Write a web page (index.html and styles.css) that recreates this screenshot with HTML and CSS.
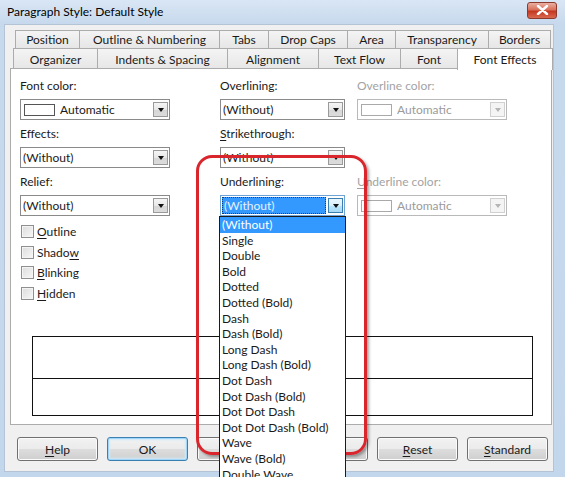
FILE: index.html
```html
<!DOCTYPE html>
<html>
<head>
<meta charset="utf-8">
<link rel="stylesheet" href="styles.css">
</head>
<body>
<div class="window">
  <div class="titlebar">
    <span class="title">Paragraph Style: Default Style</span>
    <span class="close"><svg width="13" height="10" viewBox="0 0 13 10"><path d="M2 1 L11 9 M11 1 L2 9" stroke="#fff" stroke-width="2.4" stroke-linecap="round"/></svg></span>
  </div>
  <div class="client">
    <div class="tabrow row1">
      <div class="tab">Position</div>
      <div class="tab">Outline &amp; Numbering</div>
      <div class="tab">Tabs</div>
      <div class="tab">Drop Caps</div>
      <div class="tab">Area</div>
      <div class="tab">Transparency</div>
      <div class="tab">Borders</div>
    </div>
    <div class="tabrow row2">
      <div class="tab">Organizer</div>
      <div class="tab">Indents &amp; Spacing</div>
      <div class="tab">Alignment</div>
      <div class="tab">Text Flow</div>
      <div class="tab">Font</div>
      <div class="tab selected">Font Effects</div>
    </div>
    <div class="panel">
      <div class="form">
        <div class="group">
          <div class="label">Font color:</div>
          <div class="combo wide"><span class="swatch"></span><span class="ctext">Automatic</span><span class="cbtn"><i class="arrow"></i></span></div>
        </div>
        <div class="group">
          <div class="label">Overlining:</div>
          <div class="combo narrow"><span class="ctext">(Without)</span><span class="cbtn"><i class="arrow"></i></span></div>
        </div>
        <div class="group">
          <div class="label disabled">Overline color:</div>
          <div class="combo wide off"><span class="swatch"></span><span class="ctext">Automatic</span><span class="cbtn"><i class="arrow"></i></span></div>
        </div>

        <div class="group">
          <div class="label">Effects:</div>
          <div class="combo wide"><span class="ctext">(Without)</span><span class="cbtn"><i class="arrow"></i></span></div>
        </div>
        <div class="group">
          <div class="label"><u>S</u>trikethrough:</div>
          <div class="combo narrow"><span class="ctext">(Without)</span><span class="cbtn"><i class="arrow"></i></span></div>
        </div>
        <div class="group"></div>

        <div class="group">
          <div class="label">Relief:</div>
          <div class="combo wide"><span class="ctext">(Without)</span><span class="cbtn"><i class="arrow"></i></span></div>
        </div>
        <div class="group">
          <div class="label">Underlining:</div>
          <div class="combo narrow focus"><span class="ctext">(Without)</span><span class="cbtn"><i class="arrow"></i></span></div>
        </div>
        <div class="group">
          <div class="label disabled"><u>U</u>nderline color:</div>
          <div class="combo wide off"><span class="swatch"></span><span class="ctext">Automatic</span><span class="cbtn"><i class="arrow"></i></span></div>
        </div>
      </div>
      <div class="checks">
        <div class="check"><span class="box"></span><span><u>O</u>utline</span></div>
        <div class="check"><span class="box"></span><span>Shado<u>w</u></span></div>
        <div class="check"><span class="box"></span><span><u>B</u>linking</span></div>
        <div class="check"><span class="box"></span><span><u>H</u>idden</span></div>
      </div>
      <div class="preview">
        <div class="prow top"></div>
        <div class="prow"></div>
      </div>
    </div>
    <div class="buttons">
      <div class="btn"><u>H</u>elp</div>
      <div class="btn default">OK</div>
      <div class="btn"></div>
      <div class="btn"></div>
      <div class="btn"><u>R</u>eset</div>
      <div class="btn"><u>S</u>tandard</div>
    </div>
  </div>

  <div class="highlight"></div>
  <ul class="droplist">
    <li class="sel">(Without)</li>
    <li>Single</li>
    <li>Double</li>
    <li>Bold</li>
    <li>Dotted</li>
    <li>Dotted (Bold)</li>
    <li>Dash</li>
    <li>Dash (Bold)</li>
    <li>Long Dash</li>
    <li>Long Dash (Bold)</li>
    <li>Dot Dash</li>
    <li>Dot Dash (Bold)</li>
    <li>Dot Dot Dash</li>
    <li>Dot Dot Dash (Bold)</li>
    <li>Wave</li>
    <li>Wave (Bold)</li>
    <li>Double Wave</li>
  </ul>
</div>
</body>
</html>
```

FILE: styles.css
```css
* { box-sizing: border-box; }
html, body { margin: 0; padding: 0; }
body {
  width: 565px;
  height: 477px;
  overflow: hidden;
  font-family: "Segoe UI", Lato, "Open Sans", sans-serif;
  font-size: 12px;
  color: #1a1a1a;
}
u { text-decoration: underline; text-underline-offset: 2px; }

.window {
  position: relative;
  width: 565px;
  height: 477px;
  background: linear-gradient(180deg, #d9e6f4 0px, #c7d9ed 24px, #c3d7ec 100%);
  display: flex;
  flex-direction: column;
  overflow: hidden;
}

.titlebar {
  height: 24px;
  flex: none;
  display: flex;
  align-items: center;
  justify-content: space-between;
  padding: 0 8px 2px 7px;
}
.title { font-size: 12px; color: #000; }
.close {
  width: 30px;
  height: 17px;
  margin-top: -2px;
  border: 1px solid #8b3a2b;
  border-radius: 3px;
  background: linear-gradient(180deg, #eab0a2 0%, #d8715c 45%, #c5371f 55%, #d96a4f 100%);
  display: flex;
  align-items: center;
  justify-content: center;
}

.client {
  flex: 1;
  margin: 0 11px 5px 4px;
  background: #f0f0f0;
  border: 1px solid #b4c4d6;
  padding: 5px 0 0 0;
}

.tabrow {
  display: grid;
  align-items: end;
}
.row1 {
  height: 18px;
  margin-left: 10px;
  grid-template-columns: 64px 140px 49px 79px 48px 93px 62px;
}
.row2 {
  height: 20px;
  margin-left: 8px;
  grid-template-columns: 84px 130px 91px 82px 57px 95px;
}
.tab {
  height: 100%;
  border: 1px solid #acacac;
  border-bottom: none;
  background: linear-gradient(180deg, #f4f4f4, #e6e6e6);
  display: flex;
  align-items: center;
  justify-content: center;
  color: #1a1a1a;
  white-space: nowrap;
}
.row1 .tab { margin-right: -1px; }
.row2 .tab { margin-right: -1px; }
.tab.selected {
  height: 22px;
  margin-bottom: -1px;
  background: #fff;
  position: relative;
  z-index: 2;
}

.panel {
  position: relative;
  margin-left: 5px;
  width: 542px;
  height: 357px;
  background: #fff;
  border: 1px solid #acacac;
  padding: 9px 0 0 9px;
}

.form {
  display: grid;
  grid-template-columns: 200px 137px 150px;
  row-gap: 6px;
}
.label {
  height: 16px;
  line-height: 16px;
  margin-bottom: 5px;
  white-space: nowrap;
}
.label.disabled { color: #a3a3a3; }

.combo {
  height: 21px;
  border: 1px solid #8a8a8a;
  background: #fff;
  display: flex;
  align-items: center;
  padding: 0 1px 0 2px;
}
.combo.wide { width: 150px; }
.combo.narrow { width: 125px; }
.ctext { flex: 1; white-space: nowrap; overflow: hidden; }
.swatch {
  width: 31px;
  height: 12px;
  border: 1px solid #555;
  background: #fff;
  margin: 0 5px 0 1px;
}
.cbtn {
  width: 15px;
  height: 15px;
  border: 1px solid #9a9a9a;
  background: linear-gradient(180deg, #f5f5f5 0%, #e8e8e8 50%, #d6d6d6 51%, #dcdcdc 100%);
  display: flex;
  align-items: center;
  justify-content: center;
}
.arrow {
  width: 0;
  height: 0;
  border-left: 3.5px solid transparent;
  border-right: 3.5px solid transparent;
  border-top: 4px solid #111;
}
.combo.off { border-color: #b9b9b9; color: #9b9b9b; }
.combo.off .swatch { border-color: #a9a9a9; }
.combo.off .cbtn { border-color: #d0d0d0; background: #f4f4f4; }
.combo.off .arrow { border-top-color: #b5b5b5; }

.combo.focus { border-color: #6fa3d6; padding-left: 1px; }
.combo.focus .ctext {
  background: #3399ff;
  color: #e6f2ff;
  height: 17px;
  line-height: 15px;
  border: 1px dotted #1a3f66;
  padding-left: 1px;
  margin-right: 2px;
}
.combo.focus .cbtn {
  border-color: #3c7fb1;
  background: linear-gradient(180deg, #eaf6fd 0%, #d9f0fc 50%, #bee6fd 51%, #a7d9f5 100%);
}

.checks { margin-top: 5px; }
.check {
  height: 20.7px;
  display: flex;
  align-items: center;
  padding-left: 1px;
}
.box {
  width: 13px;
  height: 13px;
  border: 1px solid #8f8f8f;
  background: linear-gradient(135deg, #dcdcdc, #f7f7f7);
  box-shadow: inset 0 0 0 1px #f4f4f4;
  margin-right: 3px;
}

.preview {
  margin-top: 32px;
  margin-left: 12px;
  width: 501px;
  height: 80px;
  border: 1px solid #111;
  display: flex;
  flex-direction: column;
}
.prow { flex: 1; }
.prow.top { flex: none; height: 42px; border-bottom: 1px solid #111; }

.buttons {
  display: flex;
  gap: 9px;
  margin-top: 12px;
  padding-left: 12px;
}
.btn {
  width: 81px;
  height: 24px;
  border: 1px solid #707070;
  border-radius: 3px;
  background: linear-gradient(180deg, #f2f2f2 0%, #ebebeb 49%, #dddddd 50%, #cfcfcf 100%);
  box-shadow: inset 0 0 0 1px #fbfbfb;
  display: flex;
  align-items: center;
  justify-content: center;
  color: #1a1a1a;
}
.btn.default {
  border-color: #3c7fb1;
  box-shadow: inset 0 0 0 1px #9fd5f6, inset 0 0 2px 2px #cdeaf9;
}

.highlight {
  position: absolute;
  left: 196px;
  top: 155px;
  width: 171px;
  height: 300px;
  border: 3px solid #d9262c;
  border-radius: 16px;
  box-shadow: 2px 2px 3px rgba(0, 0, 0, 0.35);
  z-index: 5;
}

.droplist {
  position: absolute;
  left: 219px;
  top: 216px;
  width: 127px;
  height: 280px;
  margin: 0;
  padding: 0;
  list-style: none;
  background: #fff;
  border: 1px solid #1b1b1b;
  z-index: 6;
}
.droplist li {
  height: 15.6px;
  line-height: 15.6px;
  padding-left: 2px;
  white-space: nowrap;
  color: #1a1a1a;
}
.droplist li.sel { background: #3399ff; color: #fff; }
```
